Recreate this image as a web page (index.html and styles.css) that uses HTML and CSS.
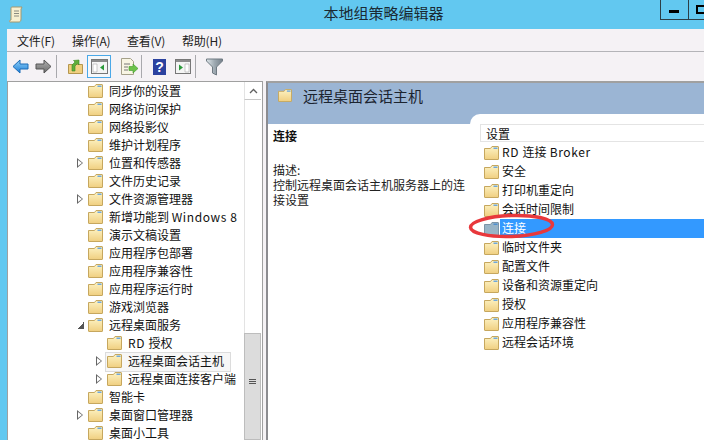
FILE: index.html
```html
<!DOCTYPE html>
<html lang="zh">
<head>
<meta charset="utf-8">
<title>本地组策略编辑器</title>
<link rel="stylesheet" href="styles.css">
</head>
<body>
<svg class="defs" width="0" height="0">
  <defs>
    <linearGradient id="fg" x1="0" y1="0" x2="0" y2="1"><stop offset="0" stop-color="#fdf3c4"/><stop offset="1" stop-color="#f0cf80"/></linearGradient>
    <linearGradient id="ab" x1="0" y1="0" x2="0" y2="1"><stop offset="0" stop-color="#8fd0f8"/><stop offset="1" stop-color="#1f80d8"/></linearGradient>
    <linearGradient id="ag" x1="0" y1="0" x2="0" y2="1"><stop offset="0" stop-color="#b0b0b0"/><stop offset="1" stop-color="#6a6a6a"/></linearGradient>
    <linearGradient id="fn" x1="0" y1="0" x2="1" y2="0"><stop offset="0" stop-color="#dfe6ea"/><stop offset=".5" stop-color="#9ea9b1"/><stop offset="1" stop-color="#75808a"/></linearGradient>
    <symbol id="folder" viewBox="0 0 15 14">
      <path d="M.5 2.500V13a.5.5 0 0 0 .5.5h13a.5.5 0 0 0 .5-.5V1a.5.5 0 0 0-.5-.5H8L6.500 2.500z" fill="url(#fg)" stroke="#c6a75e"/>
      <rect x="9.500" y="1.500" width="4" height="1.500" fill="#6fa8dc"/>
    </symbol>
    <symbol id="folder-sel" viewBox="0 0 15 14">
      <path d="M.5 2.500V13a.5.5 0 0 0 .5.5h13a.5.5 0 0 0 .5-.5V1a.5.5 0 0 0-.5-.5H8L6.500 2.500z" fill="#98b4c6" stroke="#7c94a6"/>
      <rect x="9.500" y="1.500" width="4" height="1.500" fill="#4f8fd0"/>
    </symbol>
  </defs>
</svg>
<div class="window">
  <header class="titlebar">
    <svg class="appicon" width="14" height="17" viewBox="0 0 14 17"><path d="M3 1h10l-1 2v10c0 2-1 3-2 3H1c-1 0-1-2 1-2V3c0-1 0-2 1-2z" fill="#f7efd0" stroke="#a8986c"/><path d="M5 5h5M5 7.500h5M5 10h5" stroke="#8a8a80"/></svg>
    <span class="title">本地组策略编辑器</span>
    <div class="winbtns"><span class="winbtn"><i class="minglyph"></i></span><span class="winbtn"><i class="maxglyph"></i></span></div>
  </header>
  <div class="client">
    <nav class="menubar"><span>文件(F)</span><span>操作(A)</span><span>查看(V)</span><span>帮助(H)</span></nav>
    <div class="toolbar">
      <svg class="tb w-back" width="17" height="15" viewBox="0 0 17 15"><path d="M1 7.500 8 1v4h8v5H8v4z" fill="url(#ab)" stroke="#1c6cb8"/></svg>
      <svg class="tb w-fwd" width="17" height="15" viewBox="0 0 17 15"><path d="M16 7.500 9 1v4H1v5h8v4z" fill="url(#ag)" stroke="#555"/></svg>
      <i class="sep"></i>
      <svg class="tb w-up" width="15" height="15" viewBox="0 0 15 15"><path d="M.5 5.500h14v9H.5z" fill="#f0cf80" stroke="#b5964e"/><path d="M4 12V6l3-3-1.500-1.500L11 1v5L9.500 4.500 7 7v5z" fill="#5fae3a" stroke="#3d8a20" stroke-width=".6"/></svg>
      <span class="tbactive"><svg width="17" height="15" viewBox="0 0 17 15"><rect x=".5" y=".5" width="16" height="14" fill="#f5f5f5" stroke="#777"/><path d="M1 1h15v2H1z" fill="#8c8c8c"/><path d="M2 5h4v8H2z" fill="#fff" stroke="#aaa" stroke-width=".6"/><path d="M13 5.500v6L9 8.500z" fill="#2c9b3c"/></svg></span>
      <svg class="tb w-exp" width="17" height="18" viewBox="0 0 17 18"><path d="M.5.500h9l3 3v13H.5z" fill="#f8f5e4" stroke="#a5a08a"/><path d="M3 6h6M3 9h4M3 12h4" stroke="#777"/><path d="M8 8.500h4V6l5 4.500-5 4.500v-2.500H8z" fill="#6cc24a" stroke="#3f9a2a" stroke-width=".6"/></svg>
      <i class="sep sep2"></i>
      <svg class="tb w-help" width="13" height="16" viewBox="0 0 13 16"><rect width="13" height="16" fill="#2b429f"/><text x="6.500" y="13" class="qmark">?</text></svg>
      <svg class="tb w-act" width="16" height="15" viewBox="0 0 16 15"><rect x=".5" y=".5" width="15" height="14" fill="#f5f5f5" stroke="#777"/><path d="M1 1h14v2H1z" fill="#8c8c8c"/><path d="M10 5h4v8h-4z" fill="#fff" stroke="#aaa" stroke-width=".6"/><path d="M4 5.500v6L8 8.500z" fill="#2c9b3c"/></svg>
      <i class="sep sep3"></i>
      <svg class="tb w-filter" width="17" height="18" viewBox="0 0 17 18"><path d="M.5 1h16v2l-6 6v8l-4-2V9L.5 3z" fill="url(#fn)" stroke="#6f7a82"/></svg>
    </div>
    <main class="panes">
      <section class="treepane">
        <ul class="tree">
          <li class="node l1"><svg class="fi"><use href="#folder"/></svg><span>同步你的设置</span></li>
          <li class="node l1"><svg class="fi"><use href="#folder"/></svg><span>网络访问保护</span></li>
          <li class="node l1"><svg class="fi"><use href="#folder"/></svg><span>网络投影仪</span></li>
          <li class="node l1"><svg class="fi"><use href="#folder"/></svg><span>维护计划程序</span></li>
          <li class="node l1"><b class="tw"></b><svg class="fi"><use href="#folder"/></svg><span>位置和传感器</span></li>
          <li class="node l1"><svg class="fi"><use href="#folder"/></svg><span>文件历史记录</span></li>
          <li class="node l1"><b class="tw"></b><svg class="fi"><use href="#folder"/></svg><span>文件资源管理器</span></li>
          <li class="node l1"><svg class="fi"><use href="#folder"/></svg><span>新增功能到 <em class="lat">Windows 8</em></span></li>
          <li class="node l1"><svg class="fi"><use href="#folder"/></svg><span>演示文稿设置</span></li>
          <li class="node l1"><svg class="fi"><use href="#folder"/></svg><span>应用程序包部署</span></li>
          <li class="node l1"><svg class="fi"><use href="#folder"/></svg><span>应用程序兼容性</span></li>
          <li class="node l1"><svg class="fi"><use href="#folder"/></svg><span>应用程序运行时</span></li>
          <li class="node l1"><svg class="fi"><use href="#folder"/></svg><span>游戏浏览器</span></li>
          <li class="node l1"><b class="tw open"></b><svg class="fi"><use href="#folder"/></svg><span>远程桌面服务</span></li>
          <li class="node l2"><svg class="fi"><use href="#folder"/></svg><span><em class="lat">RD </em>授权</span></li>
          <li class="node l2 cur"><b class="tw"></b><svg class="fi"><use href="#folder"/></svg><span>远程桌面会话主机</span></li>
          <li class="node l2"><b class="tw"></b><svg class="fi"><use href="#folder"/></svg><span>远程桌面连接客户端</span></li>
          <li class="node l1"><svg class="fi"><use href="#folder"/></svg><span>智能卡</span></li>
          <li class="node l1"><b class="tw"></b><svg class="fi"><use href="#folder"/></svg><span>桌面窗口管理器</span></li>
          <li class="node l1"><svg class="fi"><use href="#folder"/></svg><span>桌面小工具</span></li>
        </ul>
        <div class="scrollbar">
          <span class="sbup"><svg width="9" height="6" viewBox="0 0 9 6"><path d="M1 5l3.500-3.500L8 5" fill="none" stroke="#606060" stroke-width="1.300"/></svg></span>
          <span class="sbtrack"></span>
          <span class="sbthumb"><i></i><i></i><i></i></span>
        </div>
      </section>
      <section class="detail">
        <div class="dhead"><svg class="fi"><use href="#folder"/></svg><h1>远程桌面会话主机</h1></div>
        <div class="dbody">
          <div class="desc">
            <h2>连接</h2>
            <p>描述:<br>控制远程桌面会话主机服务器上的连接设置</p>
          </div>
          <div class="list">
            <div class="colhead">设置</div>
            <ul class="rows">
              <li><svg class="fi"><use href="#folder"/></svg><span><em class="lat">RD </em>连接<em class="lat"> Broker</em></span></li>
              <li><svg class="fi"><use href="#folder"/></svg><span>安全</span></li>
              <li><svg class="fi"><use href="#folder"/></svg><span>打印机重定向</span></li>
              <li><svg class="fi"><use href="#folder"/></svg><span>会话时间限制</span></li>
              <li class="sel"><svg class="fi"><use href="#folder-sel"/></svg><span>连接</span></li>
              <li><svg class="fi"><use href="#folder"/></svg><span>临时文件夹</span></li>
              <li><svg class="fi"><use href="#folder"/></svg><span>配置文件</span></li>
              <li><svg class="fi"><use href="#folder"/></svg><span>设备和资源重定向</span></li>
              <li><svg class="fi"><use href="#folder"/></svg><span>授权</span></li>
              <li><svg class="fi"><use href="#folder"/></svg><span>应用程序兼容性</span></li>
              <li><svg class="fi"><use href="#folder"/></svg><span>远程会话环境</span></li>
            </ul>
          </div>
        </div>
      </section>
    </main>
  </div>
</div>
<svg class="annot" width="90" height="28" viewBox="0 0 90 28"><ellipse cx="44.500" cy="14" rx="41" ry="10.500" transform="rotate(-2 44 14)" fill="none" stroke="#e8383c" stroke-width="3.500"/></svg>
</body>
</html>
```
FILE: styles.css
```css
* { box-sizing: border-box; }
html, body { margin: 0; padding: 0; }
body {
  width: 704px; height: 440px; overflow: hidden; position: relative;
  background: #62c8f0;
  font: 12px/18px "Noto Sans CJK SC", "Liberation Sans", sans-serif;
  color: #111;
}
.defs { position: absolute; }
ul { list-style: none; margin: 0; padding: 0; }
.lat { font-style: normal; letter-spacing: .6px; }
.window { display: flex; flex-direction: column; height: 440px; }
.titlebar { height: 29px; flex: none; position: relative; display: flex; justify-content: center; align-items: center; }
.appicon { position: absolute; left: 9px; top: 6px; }
.title { font-size: 15px; color: #1a2a33; padding: 0 0 4px 63px; line-height: 25px; }
.winbtns { position: absolute; left: 660px; top: 0; display: flex; }
.winbtn { width: 28.500px; height: 20px; border: 1px solid #2c3e46; border-top: 0; margin-right: -1px; display: flex; align-items: center; justify-content: center; }
.minglyph { width: 10px; height: 3px; background: #000; margin-top: 3px; }
.maxglyph { width: 11px; height: 9px; border: 2px solid #000; }
.client { flex: 1; margin-left: 7px; background: #f5f2f5; display: flex; flex-direction: column; min-height: 0; }
.menubar { height: 23px; flex: none; display: flex; gap: 17px; padding: 3px 0 0 10px; border-bottom: 1px solid #b4b4b8; line-height: 18px; color: #222; }
.menubar span { width: 38px; white-space: nowrap; letter-spacing: -.2px; }
.toolbar { height: 29px; flex: none; display: flex; align-items: center; padding-left: 5px; }
.tb { flex: none; display: block; }
.sep { width: 1px; height: 23px; background: #a9a9ad; flex: none; margin: 0 11px 0 4px; }
.w-fwd { margin-left: 6px; }
.tbactive { width: 24px; height: 23px; border: 1px solid #4aa8e8; display: flex; align-items: center; justify-content: center; background: #f5f8fb; margin-left: 4px; }
.w-exp { margin-left: 10px; }
.sep2 { margin: 0 11px 0 3px; }
.w-act { margin-left: 9px; }
.sep3 { margin: 0 10px 0 4px; }
.qmark { font: bold 14px "Liberation Sans", sans-serif; fill: #fff; text-anchor: middle; }
.panes { flex: 1; min-height: 0; display: flex; background: #f5f2f5; }
.treepane { width: 256px; flex: none; display: flex; background: #fff; border-left: 1px solid #a0a0a0; border-top: 1px solid #a0a0a0; border-right: 1px solid #a0a0a0; overflow: hidden; }
.tree { width: 236px; flex: none; }
.node { height: 18px; display: flex; align-items: center; position: relative; white-space: nowrap; }
.l1 { padding-left: 80px; }
.l2 { padding-left: 99px; }
.fi { width: 15px; height: 14px; flex: none; }
.node span { margin-left: 6px; line-height: 16px; padding: 0 2px 0 0; }
.node.cur::before { content: ""; position: absolute; left: 97px; top: 0; width: 124px; height: 18px; border: 1px solid #dcdcdc; background: #f7f7f7; }
.node .fi, .node span { position: relative; }
.tw { position: absolute; margin-left: -11px; width: 0; height: 0; top: 4px; border-left: 6px solid #666; border-top: 5px solid transparent; border-bottom: 5px solid transparent; }
.tw::after { content: ""; position: absolute; left: -5px; top: -3px; border-left: 4px solid #fff; border-top: 3px solid transparent; border-bottom: 3px solid transparent; }
.tw.open { border: 0; width: 7px; height: 7px; top: 6px; background: linear-gradient(135deg, transparent 50%, #555 50%); }
.tw.open::after { display: none; }
.scrollbar { width: 18px; flex: none; background: #fff; display: flex; flex-direction: column; padding-right: 1px; }
.sbup { height: 18px; flex: none; border-bottom: 1px solid #c8c8c8; border-left: 1px solid #e3e3e3; display: flex; align-items: center; justify-content: center; }
.sbtrack { flex: 1; border-left: 1px solid #e3e3e3; }
.sbthumb { height: 107px; flex: none; background: #dcdcdc; border: 1px solid #bdbdbd; display: flex; flex-direction: column; gap: 1px; align-items: center; padding-top: 45px; }
.sbthumb i { width: 7px; height: 1px; background: #555; }
.detail { margin-left: 3px; flex: 1; min-width: 0; display: flex; flex-direction: column; background: #fff; border-left: 2px solid #8c8c90; border-top: 2px solid #a0a0a0; }
.dhead { height: 41px; flex: none; background: #9bb5d4; display: flex; align-items: flex-start; padding: 6px 0 0 10px; }
.dhead .fi { width: 14px; height: 13px; }
.dhead h1 { margin: -3px 0 0 11px; font-size: 15px; font-weight: 400; line-height: 20px; color: #1c2430; }
.dbody { flex: 1; min-height: 0; display: flex; }
.desc { width: 202px; flex: none; padding: 3px 0 0 5px; }
.desc h2 { margin: 0; font-size: 12px; line-height: 18px; font-weight: 700; }
.desc p { margin: 17px 0 0; font-size: 12px; line-height: 15px; color: #222; width: 194px; }
.list { flex: 1; min-width: 0; margin-top: -10px; background: #fff; border-top-left-radius: 10px; padding: 10px 0 0 10px; position: relative; }
.colhead { height: 18px; border: 1px solid #e4e4e4; border-right: 0; padding-left: 5px; line-height: 17px; font-size: 12px; }
.rows { margin-left: 4px; margin-top: 1px; }
.rows li { height: 19px; display: flex; align-items: center; white-space: nowrap; }
.rows li .fi { margin-right: 1px; }
.rows li span { flex: 1; height: 19px; padding-left: 2px; line-height: 18px; }
.rows .sel span { background: #3399ff; color: #fff; }
.annot { position: absolute; left: 467px; top: 212px; }
```
